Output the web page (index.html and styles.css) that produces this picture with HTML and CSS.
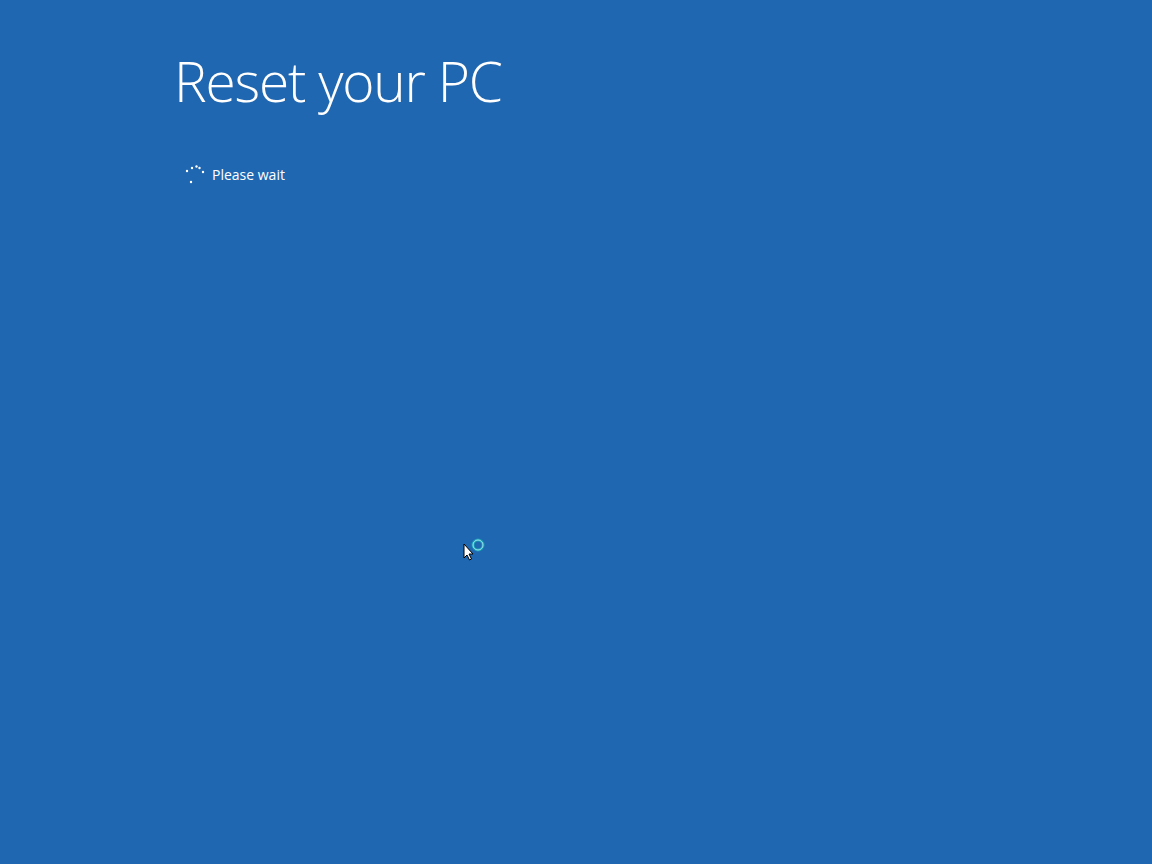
FILE: index.html
```html
<!DOCTYPE html>
<html lang="en">
<head>
    <meta charset="UTF-8">
    <title>Reset your PC</title>
    <link rel="stylesheet" href="styles.css">
</head>
<body>

<div class="screen">
    <h1 class="title">Reset your PC</h1>
    <div class="status">
        <!-- bodky otáčajúceho sa kolieska -->
        <svg class="spinner" width="22" height="22" viewBox="0 0 22 22">
            <circle cx="3" cy="8" r="1.2" fill="#fff"/>
            <circle cx="8" cy="5" r="1.2" fill="#fff"/>
            <circle cx="12.5" cy="3.5" r="1.2" fill="#fff"/>
            <circle cx="15.5" cy="5" r="1.2" fill="#fff"/>
            <circle cx="19" cy="9" r="1.2" fill="#fff"/>
            <circle cx="7" cy="19" r="1.2" fill="#fff"/>
        </svg>
        <span class="status-text">Please wait</span>
    </div>
</div>

<!-- kurzor myši s kruhom "zaneprázdnený" -->
<svg class="cursor" width="32" height="26" viewBox="0 0 32 26">
    <circle cx="18" cy="9" r="5" fill="none" stroke="#1a9fb6" stroke-width="3"/>
    <circle cx="18" cy="9" r="5" fill="none" stroke="#9fe6f0" stroke-width="1"/>
    <path d="M4 8 L4 22 L7 19 L9.5 24 L11.5 23 L9 18 L13 18 Z" fill="#fff" stroke="#000" stroke-width="1"/>
</svg>

</body>
</html>
```

FILE: styles.css
```css
body {
    margin: 0;
    background-color: #2067b1;
    font-family: 'Open Sans', 'Liberation Sans', sans-serif;
    color: #fff;
    height: 864px;
    overflow: hidden;
}
.screen {
    padding: 46px 0 0 174px;
}
.title {
    margin: 0;
    font-size: 55px;
    font-weight: 300;
    line-height: 70px;
    letter-spacing: -1.2px;
}
.status {
    display: flex;
    align-items: center;
    gap: 6px;
    margin-top: 47px;
    padding-left: 10px;
}
.spinner {
    display: block;
}
.status-text {
    font-size: 14px;
}
.cursor {
    position: absolute;
    left: 460px;
    top: 536px;
}
```
